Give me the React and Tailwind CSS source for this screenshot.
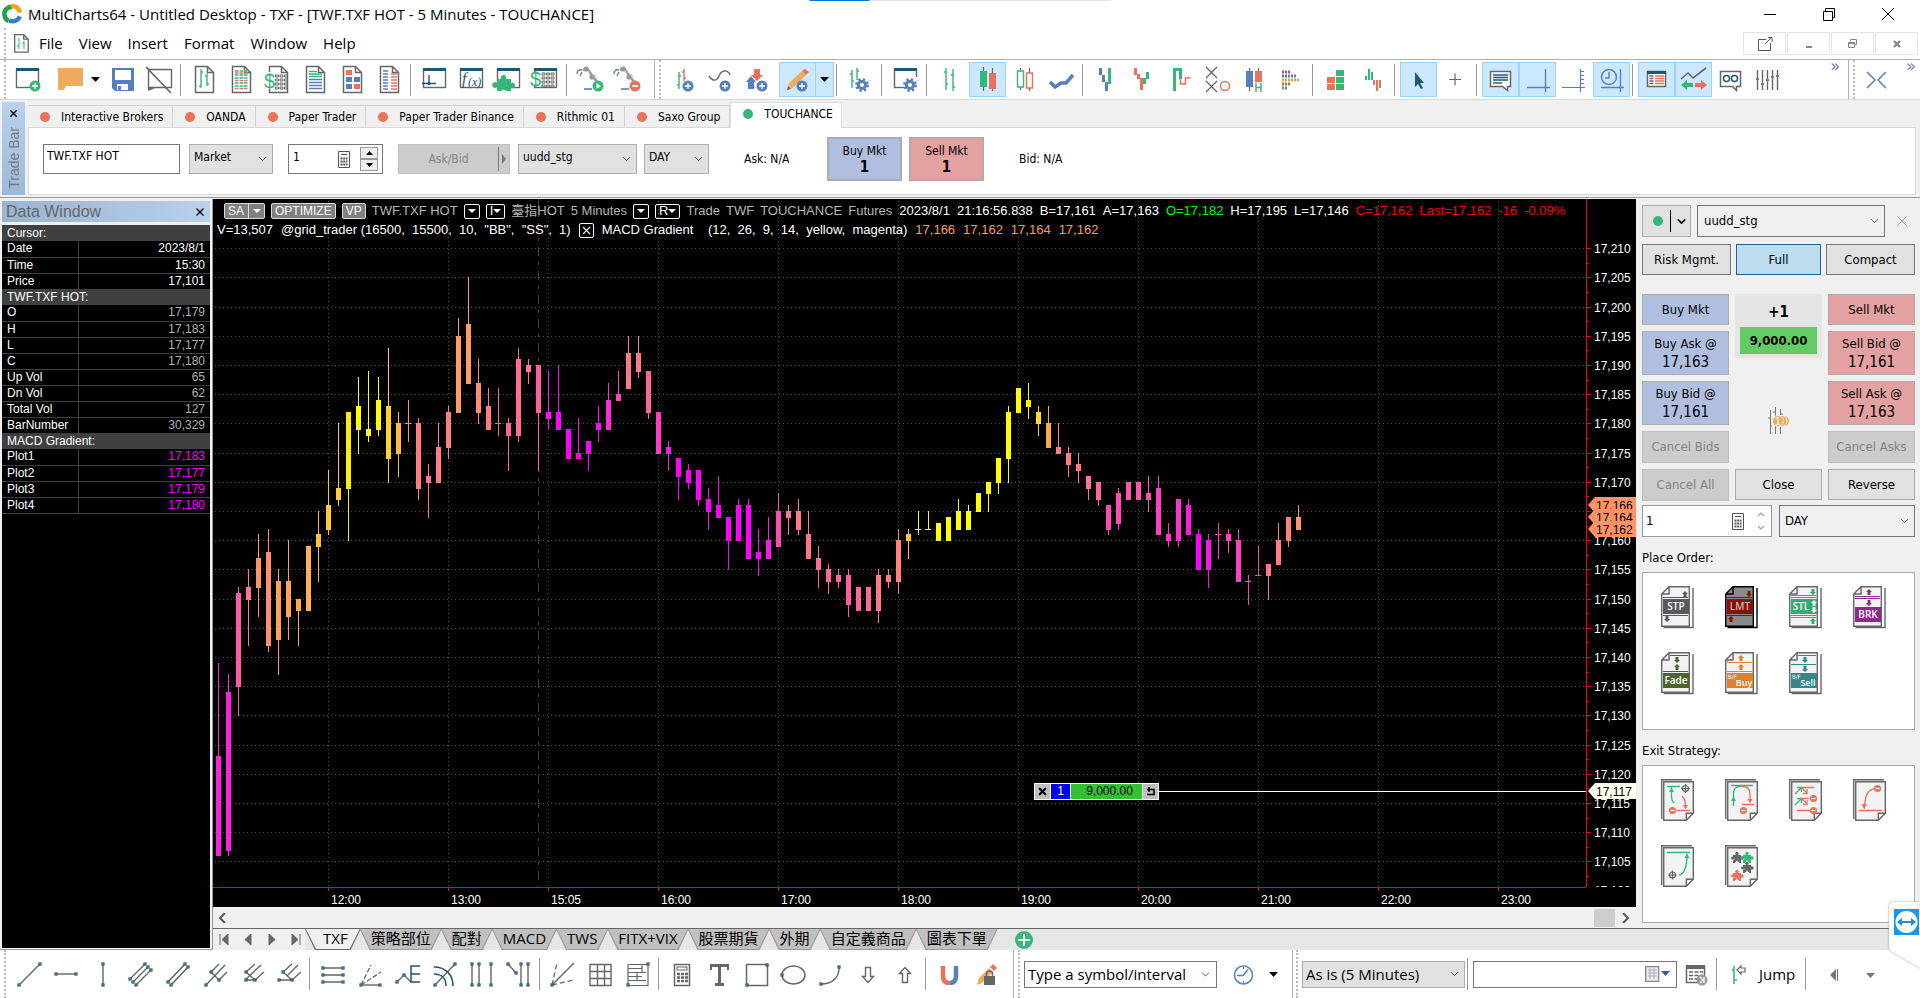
import { ChevronDown, X } from 'lucide-react';

const GRAY = '#666666';
const NAVY = '#1f5673';
const GREEN = '#35b779';
const RED = '#e8735a';
const BLUE = '#5580bd';
const SAND = '#edac60';

/* ---------- Icon building blocks ---------- */

const Doc = () => (
  <path d="M9.5 4.5h12l6 6v20h-18zM21.5 4.5v6h6" fill="#fff" stroke={GRAY} strokeWidth="1.5" />
);

const Win = () => (
  <>
    <rect x="7.5" y="7.5" width="22" height="18" fill="#fff" stroke={GRAY} strokeWidth="1.4" />
    <rect x="7" y="6" width="23" height="3" fill={NAVY} />
  </>
);

const Plus = ({ x, y, color = BLUE }) => (
  <>
    <circle cx={x} cy={y} r="5.5" fill={color} />
    <path d={`M${x - 3} ${y}h6M${x} ${y - 3}v6`} stroke="#fff" strokeWidth="1.3" />
  </>
);

const Gear = ({ x, y }) => (
  <>
    <circle cx={x} cy={y} r="5.6" fill="none" stroke={BLUE} strokeWidth="2.6" strokeDasharray="2.3 2.1" />
    <circle cx={x} cy={y} r="3.6" fill="none" stroke={BLUE} strokeWidth="3" />
  </>
);

const Lines = ({ color, x1, x2, ys, dash }) => (
  <path d={ys.map((y) => `M${x1} ${y}H${x2}`).join('')} stroke={color} strokeWidth="1.4" strokeDasharray={dash} />
);

const Keys = ({ x, y }) => (
  <path
    d={[0, 4, 8, 12].map((d) => `M${x} ${y + d}h3v2h-3zM${x + 4.5} ${y + d}h3v2h-3zM${x + 9} ${y + d}h3v2h-3z`).join('')}
    fill="none"
    stroke={GRAY}
    strokeWidth="1"
  />
);

const Robot = () => (
  <>
    <path d="M11 8l4-2 6 9 5 6" fill="none" stroke="#999" strokeWidth="2.4" />
    <path d="M15 7l3 6M22 12l3 5" fill="none" stroke="#ccc" strokeWidth="1.2" />
    <circle cx="14" cy="7" r="2.6" fill="#999" />
    <circle cx="20" cy="15" r="2.6" fill="#999" />
    <path d="M10 8c-3-1-5 1-5 4M10 10l-2 4" fill="none" stroke={BLUE} strokeWidth="1.4" />
    <path d="M12 27h8" stroke={BLUE} strokeWidth="1.6" />
  </>
);

const Dollar = ({ x, y }) => (
  <text x={x} y={y} fontSize="20" fill={GREEN} fontFamily="Liberation Sans, sans-serif">$</text>
);

const Knots = ({ points }) =>
  points.map(([x, y]) => <rect key={`${x}-${y}`} x={x - 1} y={y - 1} width="2" height="2" fill="#fff" stroke={NAVY} strokeWidth="1.2" />);

const ICONS = {
  newWindow: <><Win /><Plus x={26} y={24} color={GREEN} /></>,
  folder: <path d="M10 6h25v18H18l-2 4H10z" fill={SAND} />,
  save: (
    <>
      <path d="M8 6h22v23H11l-3-3z" fill={BLUE} />
      <path d="M11 8h16v10H11zM13 22h11v6H13z" fill="#fff" />
      <path d="M14 24h3v4h-3z" fill={BLUE} />
    </>
  ),
  noWindow: (
    <>
      <path d="M7.5 7.5h23v18h-23z" fill="none" stroke={GRAY} strokeWidth="1.4" />
      <path d="M7 25h9l-4 2-5 2z" fill={GRAY} />
      <path d="M5 5l25 26" stroke={GRAY} strokeWidth="1.8" />
    </>
  ),
  docBars: <><Doc /><path d="M15 7v19M13 24h2M15 10h2M21 11v13M19 14h2M21 22h2" stroke={GREEN} strokeWidth="1.4" /></>,
  docQuotes: (
    <>
      <Doc />
      <Lines color={GREEN} x1={12} x2={25} ys={[9, 13, 16, 21, 24]} dash="3.5 1" />
      <Lines color={RED} x1={12} x2={25} ys={[11, 18.5, 26.5]} dash="3.5 1" />
    </>
  ),
  docDollar: <><Doc /><rect x="5" y="10" width="9" height="17" fill="#fff" /><Dollar x={4} y={26} /><Keys x={15.5} y={13} /></>,
  docText: (
    <>
      <Doc />
      <Lines color={GREEN} x1={12} x2={25} ys={[12, 14.5]} />
      <Lines color={GREEN} x1={12} x2={20} ys={[9.5]} />
      <Lines color={BLUE} x1={12} x2={25} ys={[17.5, 20.5, 23.5, 26.5]} />
    </>
  ),
  docTiles: (
    <>
      <Doc />
      <path d="M12 8h6v5h-6zM20 22h6v5h-6z" fill={RED} />
      <path d="M12 15h6v5h-6zM20 15h6v5h-6zM12 22h6v5h-6z" fill={BLUE} />
    </>
  ),
  docTable: (
    <>
      <Doc />
      <Lines color={BLUE} x1={12} x2={17} ys={[9, 12, 15, 18, 21, 24, 27]} />
      <Lines color={RED} x1={20} x2={26} ys={[12, 15, 18, 21, 24, 27]} />
    </>
  ),
  winLine: <><Win /><path d="M13 13v9M6 21.5h14" stroke={NAVY} strokeWidth="1.4" /><circle cx="13" cy="21.5" r="1.5" fill={NAVY} /></>,
  winFx: (
    <>
      <Win />
      <text x="9" y="22" fontSize="16" fontStyle="italic" fill={NAVY} fontFamily="Liberation Serif, serif">f</text>
      <text x="15" y="24" fontSize="12" fontStyle="italic" fill={NAVY} fontFamily="Liberation Serif, serif">(x)</text>
    </>
  ),
  winPuzzle: <><Win /><path d="M7 17h4a2.800 2.800 0 1 1 5 0h5v4a2.800 2.800 0 1 1 0 5v3h-5a2.800 2.800 0 0 0-5 0H7v-4a2.800 2.800 0 1 1 0-4z" fill={GREEN} /></>,
  winDollar: <><Win /><rect x="4" y="10" width="9" height="14" fill="#fff" /><Dollar x={3} y={24} /><Keys x={15} y={11} /></>,
  robotPlay: <><Robot /><circle cx="26" cy="24" r="5.5" fill={GREEN} /><path d="M24.5 21l4.5 3-4.500 3z" fill="#fff" /></>,
  robotStop: <><Robot /><circle cx="26" cy="24" r="5.5" fill={RED} /><path d="M23 24h6" stroke="#fff" strokeWidth="1.6" /></>,
  barsPlus: <><path d="M11 10v17M9 23h2M11 14h2" stroke={GREEN} strokeWidth="1.4" /><path d="M16 7v12M14 10h2M16 16h2" stroke={RED} strokeWidth="1.4" /><Plus x={20} y={24} /></>,
  wavePlus: <><path d="M4 14c4 6 8 5 10 0s8-8 11-1" fill="none" stroke={GRAY} strokeWidth="1.4" /><Plus x={20} y={24} /></>,
  arrowsPlus: (
    <>
      <path d="M12 7h6v6h3l-6 6-6-6h3z" fill={RED} />
      <path d="M9 14l5 6h-2v7H6v-7H4z" fill={BLUE} />
      <Plus x={20} y={24} />
    </>
  ),
  pencilPlus: (
    <>
      <path d="M8 28l2-7L23 9l4 4-12 12z" fill={SAND} />
      <path d="M23 9l3-2 4 3-3 3z" fill={RED} />
      <path d="M8 28l1-4 3 3z" fill={GRAY} />
      <Plus x={23} y={24} />
    </>
  ),
  barsGear: <><path d="M10 8v18M8 12h2M10 19h2M15 6v12M15 9h2" stroke={GREEN} strokeWidth="1.4" /><Gear x={20} y={23} /></>,
  winGear: <><Win /><rect x="17" y="15" width="15" height="14" fill="#fff" /><Gear x={23} y={23} /></>,
  ohlc: <path d="M14 6v22M12 10h2M14 22h2M21 7v22M19 13h2M21 25h2" stroke={GREEN} strokeWidth="1.4" />,
  candles: (
    <>
      <path d="M14.5 5v24M23.5 6v23" stroke={GRAY} strokeWidth="1.2" />
      <path d="M11 9h7v16h-7z" fill={GREEN} />
      <path d="M20 11h7v16h-7z" fill={RED} />
    </>
  ),
  hollow: (
    <>
      <path d="M14.5 6v3M14.5 25v3M23.5 6v5M23.5 26v3" stroke={GRAY} strokeWidth="1.2" />
      <path d="M11.5 9h6v16h-6z" fill="none" stroke={GREEN} strokeWidth="1.4" />
      <path d="M20.5 11h6v15h-6z" fill="none" stroke={RED} strokeWidth="1.4" />
    </>
  ),
  line: <path d="M7 20l5 5 6-4 5 0 7-8" fill="none" stroke={BLUE} strokeWidth="3.5" />,
  kagi1: (
    <>
      <path d="M11 6h3v7h-3zM14 13h3v7h-3zM17 20h3v9h-3z" fill={BLUE} />
      <path d="M20 6h3v16h-3z" fill={GREEN} />
    </>
  ),
  kagi2: (
    <>
      <path d="M9 6h3v7H9zM12 12h3v5h-3zM15 16h3v12h-3z" fill={RED} />
      <path d="M18 16h3v6h-3zM21 10h3v7h-3z" fill={GREEN} />
    </>
  ),
  renko: (
    <>
      <path d="M12.5 29V7.5h6V17" fill="none" stroke={GREEN} strokeWidth="3" />
      <path d="M18.5 16v6h5v-6h5" fill="none" stroke={RED} strokeWidth="1.5" />
    </>
  ),
  pointFig: (
    <>
      <path d="M7 5l11 11M18 5L7 16M7 19l11 11M18 19L7 30" stroke={GRAY} strokeWidth="1.3" />
      <circle cx="26" cy="24" r="4.5" fill="none" stroke={RED} strokeWidth="1.4" />
    </>
  ),
  heikin: (
    <>
      <path d="M13.5 6v23M22.5 6v5" stroke={GRAY} strokeWidth="1.2" />
      <path d="M10 9h7v16h-7z" fill={BLUE} />
      <path d="M19 9h7v11h-7z" fill={RED} />
      <path d="M20 21v9M25 21v9M20 25.5h5" stroke={GREEN} strokeWidth="1.4" />
    </>
  ),
  profile: (
    <>
      <path d="M9 10h9" stroke="#a8597a" strokeWidth="3" strokeDasharray="2 1" />
      <path d="M9 14h15" stroke={BLUE} strokeWidth="3" strokeDasharray="2 1" />
      <path d="M9 18h18" stroke="#dba04f" strokeWidth="3" strokeDasharray="2 1" />
      <path d="M9 22h9" stroke="#c46648" strokeWidth="3" strokeDasharray="2 1" />
      <path d="M9 26h6" stroke="#5fa05c" strokeWidth="3" strokeDasharray="2 1" />
    </>
  ),
  blocks: (
    <>
      <path d="M18 8h8v6h-8zM18 15h8v6h-8z" fill={GREEN} />
      <path d="M9 15h8v6H9zM9 22h8v6H9z" fill={RED} />
      <path d="M18 22h8v6h-8z" fill={GREEN} />
    </>
  ),
  delta: (
    <>
      <path d="M10 14h2v4h-2zM13 7h2v11h-2zM16 10h2v8h-2z" fill={GREEN} />
      <path d="M18 18h2v5h-2zM21 18h2v11h-2zM24 18h2v8h-2z" fill={RED} />
    </>
  ),
  cursor: <path d="M15 10v15l3-3 3 5 2-1-3-5h4z" fill={NAVY} />,
  cross: <path d="M12 17.5h12M18 11.5v12" stroke={GRAY} strokeWidth="1.2" />,
  comment: (
    <>
      <path d="M8.5 9.5h20v15h-3v4l-5-4h-12z" fill="#fff" stroke={GRAY} strokeWidth="1.5" />
      <Lines color={NAVY} x1={11} x2={26} ys={[13, 15.5, 18]} />
      <Lines color={NAVY} x1={11} x2={20} ys={[21]} />
    </>
  ),
  axes: <path d="M8 25.5h23M26.5 7v23" stroke={BLUE} strokeWidth="1.4" />,
  axisTicks: <path d="M6 25.5h23M24.5 7v23M24 9.5h4M24 13.5h4M24 17.5h4M24 21.5h4" stroke={BLUE} strokeWidth="1.2" />,
  clockAxes: (
    <>
      <circle cx="16" cy="15" r="7.5" fill="none" stroke={BLUE} strokeWidth="1.5" />
      <path d="M16 10v6h-4M8 25.5h23M27.5 7v23" fill="none" stroke={BLUE} strokeWidth="1.4" />
    </>
  ),
  news: (
    <>
      <rect x="9.5" y="9.5" width="18" height="15" fill="#fff" stroke={GRAY} strokeWidth="1.5" />
      <rect x="9" y="9" width="19" height="3" fill={NAVY} />
      <Lines color={GRAY} x1={11.5} x2={15.5} ys={[14, 16.5, 19, 21.5]} />
      <Lines color={RED} x1={17} x2={26} ys={[14, 16.5, 19, 21.5]} />
    </>
  ),
  trend: (
    <>
      <path d="M6 17l7-6 5 5L31 6" fill="none" stroke={GRAY} strokeWidth="1.6" />
      <path d="M6 23l6-5v3h6v4h-6v3z" fill={GREEN} />
      <path d="M32 23l-6-5v3h-6v4h6v3z" fill={RED} />
    </>
  ),
  glasses: (
    <>
      <path d="M8.5 9.5h20v15h-4v4l-4-4h-12z" fill="#fff" stroke={GRAY} strokeWidth="1.5" />
      <circle cx="14.5" cy="16.5" r="3" fill="none" stroke={NAVY} strokeWidth="1.5" />
      <circle cx="22.5" cy="16.5" r="3" fill="none" stroke={NAVY} strokeWidth="1.5" />
    </>
  ),
  sliders: (
    <>
      <path d="M8.5 8v20M13.5 8v20M18.5 8v20M23.5 8v20M28.5 8v20" stroke={GRAY} strokeWidth="1.4" />
      <path d="M7 16h3v2H7zM12 21h3v2h-3zM17 17h3v2h-3zM22 14h3v2h-3zM27 13h3v2h-3z" fill={BLUE} />
    </>
  ),
  compress: <path d="M10 10l8 8-8 8M29 10l-8 8 8 8" fill="none" stroke={BLUE} strokeWidth="1.5" />,

  trendLine: <><path d="M8 28L29 7" stroke={GRAY} strokeWidth="1.4" /><Knots points={[[8, 28], [29, 7]]} /></>,
  hLine: <><path d="M8 17h20" stroke={GRAY} strokeWidth="1.4" /><Knots points={[[8, 17], [28, 17]]} /></>,
  vLine: <><path d="M18 7v21" stroke={GRAY} strokeWidth="1.4" /><Knots points={[[18, 7], [18, 28]]} /></>,
  channel3: (
    <>
      <path d="M8 22L23 7M11 25L26 10M14 28L29 13" stroke={GRAY} strokeWidth="1.4" />
      <Knots points={[[8, 22], [23, 7], [11, 25], [26, 10], [14, 28], [29, 13]]} />
    </>
  ),
  channel2: (
    <>
      <path d="M9 25L26 7M12 28L29 10" stroke={GRAY} strokeWidth="1.6" />
      <Knots points={[[9, 25], [26, 7], [12, 28], [29, 10]]} />
    </>
  ),
  fork1: (
    <>
      <path d="M10 28L29 8M15 15l8-8M23 23l8-8M15 15l8 8" stroke={GRAY} strokeWidth="1.4" />
      <Knots points={[[10, 28], [15, 15], [23, 23]]} />
    </>
  ),
  fork2: (
    <>
      <path d="M12 23L28 8M13 15l9-8M22 23l9-8M13 15l9 8h-9" fill="none" stroke={GRAY} strokeWidth="1.4" />
      <Knots points={[[13, 23], [13, 15], [22, 23]]} />
    </>
  ),
  fork3: (
    <>
      <path d="M17 19L28 8M13 15l9-8M22 23l9-8M13 15l9 8H9" fill="none" stroke={GRAY} strokeWidth="1.4" />
      <Knots points={[[9, 23], [13, 15], [22, 23]]} />
    </>
  ),
  retrace: (
    <>
      <path d="M8 11h20M8 18h20M8 25h20" stroke={GRAY} strokeWidth="1.4" />
      <Knots points={[[8, 11], [28, 11], [8, 18], [28, 18], [8, 25], [28, 25]]} />
    </>
  ),
  fanLines: (
    <>
      <path d="M9 28h19" stroke={GRAY} strokeWidth="1.4" />
      <path d="M9 28L29 15M9 28L19 8" stroke={GRAY} strokeWidth="1.3" strokeDasharray="5 2" />
      <Knots points={[[9, 28], [28, 28]]} />
    </>
  ),
  extension: (
    <>
      <path d="M8 25l7-7 7 7" fill="none" stroke={GRAY} strokeWidth="1.4" />
      <path d="M31 9h-9v16h9M22 17h9" fill="none" stroke={NAVY} strokeWidth="1.5" />
      <Knots points={[[8, 25], [15, 18]]} />
    </>
  ),
  arcs: (
    <>
      <path d="M9 28L29 7" stroke={GRAY} strokeWidth="1.4" />
      <path d="M8 10c12 0 19 8 19 19M8 17c8 0 12 5 12 12" fill="none" stroke={NAVY} strokeWidth="1.5" />
      <Knots points={[[9, 28], [29, 7]]} />
    </>
  ),
  timeZones: (
    <>
      <path d="M9 7v21M16 7v21M28 7v21" stroke={GRAY} strokeWidth="1.4" />
      <Knots points={[[9, 7], [9, 28], [16, 7], [16, 28], [28, 7], [28, 28]]} />
    </>
  ),
  timeExt: (
    <>
      <path d="M8 7l8 9M21 7v21M28 7v21" stroke={GRAY} strokeWidth="1.4" />
      <Knots points={[[8, 7], [16, 16], [21, 7], [21, 28], [28, 7], [28, 28]]} />
    </>
  ),
  gannFan: (
    <>
      <path d="M7 28L29 6" stroke={GRAY} strokeWidth="1.4" />
      <path d="M7 28l5-22M7 28l22-5" stroke={GRAY} strokeWidth="1.3" strokeDasharray="5 3" />
      <Knots points={[[7, 28]]} />
    </>
  ),
  gannGrid: <path d="M8 7.5h21v21h-21zM15.5 7v21M22.5 7v21M8 14.5h21M8 21.5h21" fill="none" stroke={GRAY} strokeWidth="1.4" />,
  gannBox: (
    <>
      <path d="M9 7.5h20v21h-20zM9 11.5h14M9 15.5h18M9 19.5h14M9 23.5h18M23 7v8M18 15v8" fill="none" stroke={GRAY} strokeWidth="1.2" />
      <Knots points={[[9, 28], [29, 7]]} />
    </>
  ),
  calculator: (
    <>
      <rect x="10.5" y="7.5" width="15" height="21" fill="none" stroke={GRAY} strokeWidth="1.5" />
      <rect x="13" y="10" width="10" height="3" fill="none" stroke={GRAY} />
      <path d="M13 17h11M13 20.5h11M13 24h11" stroke={GRAY} strokeWidth="2.5" strokeDasharray="3 1" />
    </>
  ),
  text: <path d="M9 7h19v6h-2v-3h-6v16h3v3h-9v-3h3V10h-6v3H9z" fill={GRAY} />,
  rect: <><rect x="8.5" y="7.5" width="21" height="21" fill="none" stroke={GRAY} strokeWidth="1.5" /><Knots points={[[9, 28], [29, 8]]} /></>,
  ellipse: <><ellipse cx="18.5" cy="18" rx="11.5" ry="9" fill="none" stroke={GRAY} strokeWidth="1.5" /><Knots points={[[7, 18]]} /></>,
  arc: <><path d="M9 27c10 0 18-5 18-16" fill="none" stroke={GRAY} strokeWidth="1.4" /><Knots points={[[9, 27], [27, 10]]} /></>,
  arrowDown: <path d="M16.5 10.5h5v9h3l-5.500 6-5.500-6h3z" fill="none" stroke={GRAY} strokeWidth="1.4" />,
  arrowUp: <path d="M16.5 25.5h5v-9h3l-5.500-6-5.500 6h3z" fill="none" stroke={GRAY} strokeWidth="1.4" />,
  magnet: (
    <>
      <path d="M12 9v10c0 5 2.500 7 6.500 7" fill="none" stroke={RED} strokeWidth="4.5" />
      <path d="M25 9v10c0 5-2.500 7-6.500 7" fill="none" stroke={BLUE} strokeWidth="4.5" />
    </>
  ),
  pencilLock: (
    <>
      <path d="M9 28l2-7L21 11l4 4-11 11z" fill={SAND} />
      <path d="M22 10l3-3 4 4-3 3z" fill={RED} />
      <rect x="16" y="19" width="11" height="9" fill={GRAY} />
      <path d="M18.5 19v-2a3 3 0 0 1 6 0v2" fill="none" stroke={GRAY} strokeWidth="1.5" />
    </>
  ),
  clock: (
    <>
      <circle cx="18.5" cy="18" r="9" fill="none" stroke={BLUE} strokeWidth="1.5" />
      <path d="M12 18.5h6l5-6M18.5 10v2M18.5 24v2" fill="none" stroke={BLUE} strokeWidth="1.4" />
    </>
  ),
  scriptRun: (
    <>
      <rect x="9.5" y="9.5" width="18" height="16" fill="#fff" stroke={GRAY} strokeWidth="1.5" />
      <rect x="9" y="8" width="19" height="4" fill={GRAY} />
      <path d="M12 15h14M12 18.5h14M12 22h8" stroke={GRAY} strokeWidth="1.5" strokeDasharray="4 1.5" />
      <circle cx="25" cy="23" r="5.5" fill="#999" />
      <path d="M23 20l3 3-3 3M27 20v6" fill="none" stroke="#fff" strokeWidth="1.3" />
    </>
  ),
  jump: (
    <>
      <path d="M12 9v18M10 13h2M12 23h3" stroke={GREEN} strokeWidth="1.5" />
      <path d="M15 13l4-4v2h4v4h-4v2z" fill="none" stroke={GRAY} strokeWidth="1.2" />
    </>
  ),
  stepBack: <path d="M15 18l6-6v12zM22 12h1v12h-1z" fill="#777" />,
  play: <path d="M14 16h9l-4.500 5z" fill="#777" />,
};

/* ---------- Toolbar parts ---------- */

function ToolButton({ name, active, wide }) {
  return (
    <button
      type="button"
      aria-label={name}
      className={`flex h-[35px] shrink-0 items-center justify-center border ${wide ? 'w-10' : 'w-[37px]'} ${
        active ? 'border-[#99d1ff] bg-[#cce8ff]' : 'border-transparent'
      }`}
    >
      <svg width="37" height="35" viewBox="0 0 37 35" className="shrink-0">{ICONS[name]}</svg>
    </button>
  );
}

const Tools = ({ names, active = [] }) => names.map((n) => <ToolButton key={n} name={n} active={active.includes(n)} />);

const Sep = () => <div className="mr-[5px] ml-0.5 h-8 w-px shrink-0 bg-[#999]" />;

const Grip = () => <div className="w-0 shrink-0 self-stretch border-l-2 border-dotted border-[#bbb]" />;

const Caret = ({ active, label }) => (
  <button
    type="button"
    aria-label={label}
    className={`flex h-[35px] w-[18px] shrink-0 items-center justify-center ${active ? 'border border-l-0 border-[#99d1ff] bg-[#cce8ff]' : ''}`}
  >
    <svg width="9" height="5" viewBox="0 0 9 5"><path d="M0 0h9L4.500 5z" /></svg>
  </button>
);

const More = () => <span className="self-start text-lg leading-3 text-[#7d7db3]">»</span>;

function Select({ label, value, className = '', selectClass = '' }) {
  return (
    <div className={`relative ${className}`}>
      <select aria-label={label} defaultValue={value} className={`h-full w-full appearance-none rounded-none border outline-none ${selectClass}`}>
        <option>{value}</option>
      </select>
      <ChevronDown size={13} strokeWidth={1.6} className="pointer-events-none absolute top-1/2 right-1 -translate-y-1/2 text-[#444]" />
    </div>
  );
}

const CalcIcon = () => (
  <svg width="12" height="17" viewBox="0 0 12 17" className="shrink-0">
    <path d="M.5.5h11v16H.5zM3 3.500h6" fill="none" stroke="#555" />
    <path d="M2.500 7.500h7M2.500 10.500h7M2.500 13.500h7" stroke="#555" strokeWidth="2" strokeDasharray="2 .7" />
  </svg>
);

/* ---------- Top area ---------- */

function TitleBar() {
  return (
    <header className="relative flex h-7 shrink-0 items-center pr-[25px] pl-0.5 font-[family-name:'Open_Sans',sans-serif]">
      <div className="absolute top-0 left-1/2 flex h-px w-[301px] -translate-x-1/2 bg-[#e5e5e5]">
        <div className="w-[60px] bg-[#0078d7]" />
      </div>
      <svg width="20" height="20" viewBox="0 0 20 20" fill="none" strokeWidth="4.5">
        <path d="M10 3C4 3 2 7 2.500 11c.3 3 2 5 4 6" stroke="#19a34a" />
        <path d="M9 2.500c4-1 8 1 9 6" stroke="#f6a21c" />
        <path d="M7 16.500c5 2 9 0 11-4" stroke="#3c7fc8" />
      </svg>
      <h1 className="ml-1.5 text-[15px]">MultiCharts64 - Untitled Desktop - TXF - [TWF.TXF HOT - 5 Minutes - TOUCHANCE]</h1>
      <div className="ml-auto flex gap-[45px]">
        <button type="button" aria-label="Minimize">
          <svg width="14" height="14"><path d="M1 7.500h12" stroke="#000" /></svg>
        </button>
        <button type="button" aria-label="Restore">
          <svg width="14" height="14"><path d="M1.500 4.500h9v9h-9zM3.500 4v-2.500h9v9H11" fill="none" stroke="#000" /></svg>
        </button>
        <button type="button" aria-label="Close">
          <svg width="14" height="14"><path d="M1 1l12 12M13 1L1 13" stroke="#000" /></svg>
        </button>
      </div>
    </header>
  );
}

function MenuBar() {
  const box = 'flex h-[23px] w-[43px] items-center justify-center border border-[#e5e5e5]';
  return (
    <nav className="flex h-8 shrink-0 items-center border-b border-[#b0b0b0] pl-1 font-[family-name:'Open_Sans',sans-serif] text-[15px]">
      <Grip />
      <svg width="15" height="19" viewBox="0 0 15 19" className="ml-2 shrink-0">
        <path d="M.7.7h9l4.500 4.500v13H.7zM9.700.7v4.500h4.500" fill="none" stroke={GRAY} strokeWidth="1.3" />
        <path d="M5 4v11M3 12h2M10 7v8M8 9h2" stroke={GREEN} />
      </svg>
      <div className="flex gap-4 pl-2.5">
        {['File', 'View', 'Insert', 'Format', 'Window', 'Help'].map((m) => (
          <button key={m} type="button">{m}</button>
        ))}
      </div>
      <div className="ml-auto flex gap-px pr-0.5">
        <button type="button" aria-label="Detach" className={box}>
          <svg width="16" height="14" fill="none" stroke="#555"><path d="M9 2.500H1.500v11h12V6M8 7l6-6M11 .500h4v4" /></svg>
        </button>
        <button type="button" aria-label="Minimize chart" className={box}>
          <svg width="8" height="9"><path d="M1 7h6v2H1z" fill="#7d8793" /></svg>
        </button>
        <button type="button" aria-label="Restore chart" className={box}>
          <svg width="9" height="9" fill="none" stroke="#7d8793"><path d="M2.500 2.500v-2h6v5h-2M.500 3.500h6v5h-6zM.500 4.500h6" /></svg>
        </button>
        <button type="button" aria-label="Close chart" className={box}>
          <X size={10} strokeWidth={5} className="text-[#7d8793]" />
        </button>
      </div>
    </nav>
  );
}

function MainToolbar() {
  return (
    <div className="flex h-10 shrink-0 items-center border-b border-[#d8d8d8] pl-1">
      <Grip />
      <div className="ml-[3px] flex items-center">
        <Tools names={['newWindow']} />
        <ToolButton name="folder" wide />
        <Caret label="Open recent" />
        <Tools names={['save', 'noWindow']} />
        <Sep />
        <Tools names={['docBars', 'docQuotes', 'docDollar', 'docText', 'docTiles', 'docTable']} />
        <Sep />
        <Tools names={['winLine', 'winFx', 'winPuzzle', 'winDollar']} />
        <Sep />
        <Tools names={['robotPlay', 'robotStop']} />
      </div>
      <div className="ml-2 w-px self-stretch bg-[#b0b0b0]" />
      <div className="ml-1 flex self-stretch"><Grip /></div>
      <div className="ml-[7px] flex items-center">
        <Tools names={['barsPlus', 'wavePlus', 'arrowsPlus', 'pencilPlus']} active={['pencilPlus']} />
        <Caret label="Drawing tools" active />
        <Sep />
        <Tools names={['barsGear']} />
        <Sep />
        <Tools names={['winGear']} />
        <Sep />
        <Tools names={['ohlc', 'candles', 'hollow', 'line']} active={['candles']} />
        <Sep />
        <Tools names={['kagi1', 'kagi2', 'renko', 'pointFig', 'heikin', 'profile']} />
        <Sep />
        <Tools names={['blocks', 'delta']} />
        <Sep />
        <Tools names={['cursor', 'cross']} active={['cursor']} />
        <Sep />
        <Tools names={['comment', 'axes', 'axisTicks', 'clockAxes']} active={['comment', 'axes', 'clockAxes']} />
        <Sep />
        <Tools names={['news', 'trend', 'glasses', 'sliders']} active={['news', 'trend']} />
      </div>
      <div className="ml-auto flex items-center self-stretch pr-1">
        <More />
        <div className="ml-2 w-px self-stretch bg-[#b0b0b0]" />
        <div className="ml-1 flex self-stretch"><Grip /></div>
        <div className="ml-0.5 flex"><ToolButton name="compress" /></div>
        <div className="ml-3 flex self-stretch"><More /></div>
      </div>
    </div>
  );
}

const BROKERS = ['Interactive Brokers', 'OANDA', 'Paper Trader', 'Paper Trader Binance', 'Rithmic 01', 'Saxo Group'];

function TradeBar() {
  return (
    <section className="flex h-[98px] shrink-0 border-b border-[#999] bg-[#f0f0f0] pt-0.5 pr-1 pb-0.5 pl-0.5 text-xs">
      <div className="flex w-[23px] flex-col items-center bg-linear-to-b from-[#b8d1ec] to-[#9db8d8]">
        <button type="button" aria-label="Close trade bar" className="mt-1.5"><X size={11} strokeWidth={3} /></button>
        <span className="mt-2 rotate-180 font-[family-name:'Liberation_Sans',sans-serif] text-sm text-[#777] [writing-mode:vertical-rl]">Trade Bar</span>
      </div>
      <div className="ml-[3px] flex flex-1 flex-col">
        <div className="flex h-[25px] items-end">
          {BROKERS.map((b) => (
            <button key={b} type="button" className="flex h-[22px] items-center gap-[11px] border-t border-r border-[#d4d4d4] pr-[9px] pl-3 text-xs">
              <span className="size-2.5 rounded-full bg-[#e8735a]" />
              {b}
            </button>
          ))}
          <button type="button" className="relative z-10 -mb-px flex h-[26px] items-center gap-[11px] border-x border-t border-[#ddd] bg-white pr-2 pb-1 pl-3 text-xs">
            <span className="size-2.5 rounded-full bg-[#35b779]" />
            TOUCHANCE
          </button>
        </div>
        <div className="flex flex-1 items-center border border-[#d9d9d9] bg-white pb-1 pl-3.5">
          <input aria-label="Symbol" defaultValue="TWF.TXF HOT" className="h-[30px] w-[137px] border border-[#777] pb-1.5 pl-[3px] outline-none" />
          <Select label="Order type" value="Market" className="ml-[9px] h-[30px] w-[84px]" selectClass="border-[#adadad] bg-[#e1e1e1] pl-1 pb-1" />
          <div className="ml-[15px] flex h-[30px] w-[95px] items-center border border-[#777] pr-1">
            <input aria-label="Quantity" defaultValue="1" className="w-full min-w-0 pb-1 pl-1 outline-none" />
            <CalcIcon />
            <div className="ml-2.5 flex flex-col">
              <button type="button" aria-label="Increase" className="flex h-3 w-[18px] items-center justify-center border border-[#999] bg-[#eee]">
                <svg width="7" height="4"><path d="M0 4h7L3.500 0z" /></svg>
              </button>
              <button type="button" aria-label="Decrease" className="flex h-3 w-[18px] items-center justify-center border border-[#999] bg-[#eee]">
                <svg width="7" height="4"><path d="M0 0h7L3.500 4z" /></svg>
              </button>
            </div>
          </div>
          <button type="button" disabled className="ml-[15px] flex h-[30px] w-28 items-center border border-[#bfbfbf] bg-[#ccc] text-[#838383]">
            <span className="flex-1">Ask/Bid</span>
            <span className="h-6 w-px bg-[#777]" />
            <svg width="10" height="10"><path d="M3 0v10l4-5z" fill="#777" /></svg>
          </button>
          <Select label="Account" value="uudd_stg" className="ml-2 h-[30px] w-[119px]" selectClass="border-[#adadad] bg-[#e1e1e1] pl-1 pb-1" />
          <Select label="Time in force" value="DAY" className="ml-[7px] h-[30px] w-[65px]" selectClass="border-[#adadad] bg-[#e1e1e1] pl-1 pb-1" />
          <span className="ml-[35px] w-[83px]">Ask: N/A</span>
          <button type="button" className="flex h-11 w-[75px] flex-col items-center justify-center border-2 border-[#a9acb5] bg-[#b0bfe0] leading-4">
            Buy Mkt<b className="text-[15px]">1</b>
          </button>
          <button type="button" className="ml-[7px] flex h-11 w-[75px] flex-col items-center justify-center border-2 border-[#b5a9a9] bg-[#e3a1a1] leading-4">
            Sell Mkt<b className="text-[15px]">1</b>
          </button>
          <span className="ml-[35px]">Bid: N/A</span>
        </div>
      </div>
    </section>
  );
}

/* ---------- Data window ---------- */

const DATA = [
  { title: 'Cursor:', tone: 'text-white', rows: [['Date', '2023/8/1'], ['Time', '15:30'], ['Price', '17,101']] },
  {
    title: 'TWF.TXF HOT:',
    tone: 'text-[#b0b0b0]',
    rows: [
      ['O', '17,179'], ['H', '17,183'], ['L', '17,177'], ['C', '17,180'],
      ['Up Vol', '65'], ['Dn Vol', '62'], ['Total Vol', '127'], ['BarNumber', '30,329'],
    ],
  },
  { title: 'MACD Gradient:', tone: 'text-[#ff00ff]', rows: [['Plot1', '17,183'], ['Plot2', '17,177'], ['Plot3', '17,179'], ['Plot4', '17,180']] },
];

function DataWindow() {
  return (
    <aside className="flex w-[213px] shrink-0 flex-col border-r border-b border-[#999] bg-[#f0f0f0] px-0.5 pt-0.5 pb-px font-[family-name:'Liberation_Sans',sans-serif]">
      <div className="flex h-[21px] items-center justify-between bg-linear-to-r from-[#99b4d1] to-[#b9d1ea] pr-1 pl-1 text-base text-[#666]">
        Data Window
        <button type="button" aria-label="Close data window" className="text-black"><X size={12} strokeWidth={3} /></button>
      </div>
      <div className="mt-[3px] flex-1 bg-black text-white">
        <table className="w-full border-collapse text-xs leading-[15px]">
          {DATA.map((g) => (
            <tbody key={g.title}>
              <tr className="h-4 bg-[#404040]"><th colSpan={2} className="p-0 pl-[5px] text-left font-normal">{g.title}</th></tr>
              {g.rows.map(([k, v]) => (
                <tr key={k} className="h-4 border-b border-[#404040]">
                  <td className="w-[76px] border-r border-[#404040] p-0 pl-[5px]">{k}</td>
                  <td className={`p-0 pr-[5px] text-right ${g.tone}`}>{v}</td>
                </tr>
              ))}
            </tbody>
          ))}
        </table>
      </div>
    </aside>
  );
}

/* ---------- Chart ---------- */

// [high, body top, body bottom, low, green channel]; prices are offsets from 17,000
const CANDLES = [
  [139, 123, 106, 106, 32], [137, 134, 107, 106, 32], [152, 151, 135, 130, 90], [155, 152, 150, 142, 118],
  [161, 157, 152, 147, 150], [162, 158, 142, 141, 144], [155, 153, 143, 137, 160], [160, 153, 147, 143, 162],
  [150, 150, 148, 142, 166], [159, 159, 148, 148, 178], [165, 161, 159, 153, 190], [172, 166, 162, 161, 200],
  [180, 169, 167, 166, 208], [182, 182, 169, 160, 235], [188, 183, 179, 175, 255], [189, 179, 178, 177, 255],
  [188, 184, 179, 178, 255], [193, 183, 174, 170, 210], [182, 180, 175, 171, 185], [184, 180, 180, 177, 150],
  [181, 180, 169, 167, 125], [173, 171, 170, 164, 120], [180, 176, 170, 170, 125], [183, 182, 176, 174, 130],
  [198, 195, 182, 182, 155], [205, 197, 187, 187, 155], [191, 187, 182, 180, 140], [186, 183, 179, 179, 125],
  [186, 180, 180, 178, 110], [181, 180, 178, 172, 100], [193, 191, 178, 177, 110], [191, 190, 189, 187, 120],
  [190, 190, 182, 172, 95], [189, 182, 181, 179, 20], [190, 182, 179, 179, 5], [179, 179, 174, 174, 0],
  [181, 175, 174, 174, 0], [177, 177, 175, 172, 0], [183, 180, 179, 177, 15], [187, 184, 179, 179, 45],
  [189, 185, 184, 184, 70], [195, 192, 186, 186, 120], [195, 192, 189, 188, 122], [189, 189, 182, 181, 100],
  [182, 182, 175, 175, 60], [177, 176, 175, 172, 25], [174, 174, 171, 167, 0], [173, 172, 170, 169, 0],
  [172, 172, 167, 166, 0], [169, 167, 165, 162, 0], [171, 166, 164, 164, 0], [164, 164, 160, 155, 0],
  [167, 166, 160, 160, 0], [167, 166, 157, 157, 0], [162, 158, 157, 154, 5], [164, 160, 157, 157, 25],
  [168, 165, 159, 159, 75], [166, 165, 164, 161, 120], [167, 165, 162, 161, 122], [165, 161, 157, 157, 118],
  [159, 157, 155, 152, 110], [156, 155, 153, 151, 105], [155, 154, 153, 152, 100], [155, 154, 149, 147, 95],
  [152, 152, 148, 148, 100], [152, 152, 148, 148, 105], [155, 154, 148, 146, 120], [155, 154, 153, 152, 122],
  [162, 160, 153, 151, 130], [162, 161, 160, 157, 200], [165, 162, 162, 161, 255], [165, 162, 162, 162, 255],
  [163, 163, 160, 160, 255], [164, 164, 160, 160, 255], [167, 165, 162, 162, 255], [166, 165, 162, 162, 255],
  [168, 168, 165, 165, 255], [170, 170, 168, 165, 255], [174, 174, 170, 168, 255], [183, 182, 174, 170, 255],
  [186, 186, 182, 182, 255], [187, 184, 183, 181, 250], [183, 182, 180, 178, 220], [183, 180, 176, 176, 165],
  [180, 176, 175, 175, 125], [176, 175, 173, 171, 122], [175, 173, 172, 170, 122], [171, 171, 169, 167, 120],
  [170, 170, 167, 166, 105], [166, 166, 162, 161, 75], [169, 168, 163, 162, 75], [170, 170, 167, 167, 85],
  [170, 170, 167, 167, 85], [171, 168, 167, 165, 80], [171, 169, 161, 161, 65], [163, 161, 160, 159, 50],
  [167, 167, 160, 159, 50], [167, 166, 161, 161, 25], [162, 161, 155, 155, 0], [161, 160, 155, 152, 20],
  [163, 161, 161, 157, 50], [162, 161, 160, 158, 70], [162, 160, 153, 153, 65], [154, 153, 153, 149, 60],
  [159, 154, 154, 154, 65], [156, 156, 154, 150, 122], [163, 160, 156, 156, 125], [164, 164, 160, 159, 128],
  [166, 164, 162, 162, 150],
];

const priceY = (p) => Math.round(49.3 + (210 - p) * 5.838);
const barX = (i) => 5 + i * 10;

const TIMES = [
  [115, '12:00'], [235, '13:00'], [335, '15:05'], [445, '16:00'], [565, '17:00'], [685, '18:00'],
  [805, '19:00'], [925, '20:00'], [1045, '21:00'], [1165, '22:00'], [1285, '23:00'],
];

const PRICES = Array.from({ length: 23 }, (_, i) => 210 - i * 5);

function ChartHeader() {
  const tag = 'border border-[#ddd] bg-[#808080] px-[3px] text-xs text-white rounded-xs leading-[14px]';
  const drop = 'flex h-[15px] items-center border border-white px-[3px] text-white rounded-xs leading-3';
  const tri = <svg width="8" height="4"><path d="M0 0h8L4 4z" fill="#fff" /></svg>;
  return (
    <div className="absolute inset-x-0 top-1 font-[family-name:'Liberation_Sans','Noto_Sans_CJK_TC',sans-serif] text-[13px] whitespace-pre text-white">
      <div className="flex h-4 items-center gap-[7px] pl-[11px]">
        <div className="flex items-center gap-1.5 text-[#b5b5b5]">
          <button type="button" className={`${tag} flex items-center gap-1`}>SA<span className="h-3.5 w-px bg-[#ddd]" />{tri}</button>
          <button type="button" className={tag}>OPTIMIZE</button>
          <button type="button" className={tag}>VP</button>
          <span>TWF.TXF HOT</span>
          <button type="button" aria-label="Symbol menu" className={drop}>{tri}</button>
          <button type="button" className={drop}>I{tri}</button>
          <span>臺指HOT</span>
          <span>5 Minutes</span>
          <button type="button" aria-label="Interval menu" className={drop}>{tri}</button>
          <button type="button" className={drop}>R{tri}</button>
          <span>Trade</span>
          <span>TWF</span>
          <span>TOUCHANCE</span>
          <span>Futures</span>
        </div>
        <span>2023/8/1</span>
        <span>21:16:56.838</span>
        <span>B=17,161</span>
        <span>A=17,163</span>
        <span className="text-[#00ff00]">O=17,182</span>
        <span>H=17,195</span>
        <span>L=17,146</span>
        <span className="text-[#ff0000]">C=17,162</span>
        <span className="text-[#ff0000]">Last=17,162</span>
        <span className="text-[#ff0000]">-16</span>
        <span className="text-[#ff0000]">-0.09%</span>
      </div>
      <div className="mt-[3px] flex h-4 items-center gap-2 pl-1">
        <span>V=13,507</span>
        <span>{'@grid_trader (16500,  15500,  10,  "BB",  "SS",  1)'}</span>
        <button type="button" aria-label="Remove signal" className="flex size-[15px] items-center justify-center rounded-xs border border-white"><X size={13} strokeWidth={2} /></button>
        <span>{'MACD Gradient    (12,  26,  9,  14,  yellow,  magenta)'}</span>
        {['17,166', '17,162', '17,164', '17,162'].map((v, i) => <span key={i} className="text-[#ff9966]">{v}</span>)}
      </div>
    </div>
  );
}

function Flag({ price, fill }) {
  const y = priceY(price);
  return (
    <>
      <path d={`M1 ${y}l7-8h42v16H8z`} fill={fill} />
      <text x="9" y={y + 5} fill="#000">{`17,${price}`}</text>
    </>
  );
}

function Chart() {
  return (
    <div className="relative flex min-w-0 flex-1 flex-col bg-black">
      <div className="flex min-h-0 flex-1">
        <svg className="h-full min-w-0 flex-1" shapeRendering="crispEdges">
          {PRICES.map((p) => (
            <line key={p} x1="2" x2="100%" y1={priceY(p) + 0.5} y2={priceY(p) + 0.5} stroke="#4c4c4c" strokeDasharray="1 3" />
          ))}
          {TIMES.map(([x]) => (
            <line key={x} x1={x + 0.5} x2={x + 0.5} y1="2" y2="100%" stroke="#4c4c4c" strokeDasharray="1 3" />
          ))}
          <line x1="325.5" x2="325.5" y1="0" y2="100%" stroke="#444" strokeDasharray="9 6 3 6" />
          {CANDLES.map(([high, top, bottom, low, g], i) => {
            const color = `rgb(255,${g},${255 - g})`;
            return (
              <g key={i} fill={color}>
                <rect x={barX(i)} y={priceY(high)} width="1" height={priceY(low) - priceY(high) + 1} />
                <rect x={barX(i) - (top === bottom ? 3 : 2)} y={priceY(top)} width={top === bottom ? 6 : 5} height={priceY(bottom) - priceY(top) + 1} />
              </g>
            );
          })}
          <line x1="946" x2="100%" y1={priceY(117) + 0.5} y2={priceY(117) + 0.5} stroke="#fff" />
        </svg>
        <svg className="h-full w-[50px] shrink-0 border-l border-[#f00] font-[family-name:'Liberation_Sans',sans-serif] text-xs">
          {PRICES.map((p) => (
            <g key={p}>
              <path d={`M0 ${priceY(p) + 0.5}h4M0 ${priceY(p - 2.5) + 0.5}h2`} stroke="#f00" />
              <text x="7" y={priceY(p) + 5} fill="#fff">{`17,${p}`}</text>
            </g>
          ))}
          <Flag price={166} fill="#ff9366" />
          <Flag price={164} fill="#ff9366" />
          <Flag price={162} fill="#ff9366" />
          <Flag price={117} fill="#fffff0" />
        </svg>
      </div>
      <div className="mr-[50px] h-px bg-[#f00]" />
      <svg className="h-[19px] w-full shrink-0 font-[family-name:'Liberation_Sans',sans-serif] text-xs">
        {TIMES.map(([x, t]) => (
          <g key={t}>
            <path d={`M${x + 0.5} 0v3`} stroke="#f00" />
            <text x={x + 3} y="16" fill="#fff">{t}</text>
          </g>
        ))}
      </svg>
      <ChartHeader />
      {/* open position marker, sits on its price level */}
      <div className="absolute top-[584px] left-[821px] flex h-[17px] border border-white bg-white font-[family-name:'Liberation_Sans',sans-serif] text-xs leading-[15px]">
        <button type="button" aria-label="Close position" className="flex w-[15px] items-center justify-center bg-[#c0c0c0]"><X size={11} strokeWidth={5} /></button>
        <span className="ml-px w-[19px] bg-[#0000ff] text-center text-white">1</span>
        <span className="ml-px w-[71px] bg-[#32c132] pl-1.5 text-center">9,000.00</span>
        <button type="button" aria-label="Reverse position" className="ml-px flex w-[15px] items-center justify-center bg-[#c0c0c0]">
          <svg width="9" height="9" fill="none" stroke="#000" strokeWidth="1.6"><path d="M1 2.500h7v5H1M3 0v5" /></svg>
        </button>
      </div>
    </div>
  );
}

function ScrollBar() {
  return (
    <div className="flex h-[21px] shrink-0 items-center bg-[#f0f0f0] pr-1.5 pl-[5px]">
      <button type="button" aria-label="Scroll left"><svg width="9" height="10"><path d="M7 0L2 5l5 5" fill="none" stroke="#555" strokeWidth="2" /></svg></button>
      <div className="ml-auto h-[18px] w-[21px] bg-[#cdcdcd]" />
      <button type="button" aria-label="Scroll right" className="ml-1.5"><svg width="9" height="10"><path d="M2 0l5 5-5 5" fill="none" stroke="#555" strokeWidth="2" /></svg></button>
    </div>
  );
}

/* ---------- Order panel ---------- */

const up = (x, y) => `M${x} ${y}l3 3h-1.500v3h-3v-3h-1.500z`;
const down = (x, y) => `M${x} ${y + 6}l3-3h-1.500v-3h-3v3h-1.500z`;

const ORDERS = [
  { name: 'STP', color: '#58595b', y: 13, lines: [11, 29], arrows: up(24, 5) + down(6, 30) },
  { name: 'LMT', color: '#8a0f05', y: 13, dark: true, lines: [11, 29], arrows: down(24, 5) + up(6, 30) },
  { name: 'STL', color: '#2fae74', y: 13, lines: [9, 11, 29, 31], arrows: down(24, 3) + up(24, 32) },
  { name: 'BRK', color: '#8d2a8b', y: 21, lines: [10, 12], arrows: up(16, 3) + down(16, 14) },
  { name: 'Fade', color: '#4c6528', y: 21, lines: [3, 19], arrows: down(16, 5) + up(16, 12) },
  { name: 'Buy', prefix: 'B/F', color: '#df822d', y: 21, lines: [10, 19], arrows: up(16, 3) + up(16, 12) },
  { name: 'Sell', prefix: 'B/F', color: '#35868c', y: 21, lines: [3, 12], arrows: down(16, 5) + down(16, 14) },
];

function OrderIcon({ name, prefix, color, y, dark, lines, arrows }) {
  const edge = dark ? '#000' : '#666';
  return (
    <svg width="33" height="43" viewBox="0 0 33 43">
      <path d="M8 .7h20.300v39.600H.7V8zM8 .7V8H.7" fill={dark ? '#8a8a8a' : '#f3f3f6'} stroke={edge} strokeWidth="1.4" />
      <path d="M32 2v39.500H2.500" fill="none" stroke={edge} strokeWidth="1.4" />
      <path d={lines.map((l) => `M${l < 8 ? 9 : 2} ${l}.5h${l < 8 ? 18 : 25}`).join('')} stroke={color} strokeWidth="1" />
      <rect x="2" y={y} width="26" height="15" fill={color} />
      <path d={arrows} fill={color} />
      {prefix && <text x="3" y={y + 6} fontSize="6" fill="#fff">{prefix}</text>}
      <text
        x={prefix ? 19 : name === 'STL' ? 12 : 15}
        y={y + (prefix ? 13 : 11)}
        fontSize={prefix ? 9 : 10}
        fontWeight="600"
        textAnchor="middle"
        fill={dark ? '#bbb' : '#fff'}
        fontFamily="Open Sans, sans-serif"
      >
        {name}
      </text>
      {name === 'STL' && <path d={up(25, 14) + down(25, 21)} fill="#fff" />}
    </svg>
  );
}

const Target = ({ x, y }) => (
  <path d={`M${x - 4.5} ${y}h9M${x} ${y - 4.5}v9M${x - 3} ${y}a3 3 0 1 0 6 0a3 3 0 1 0-6 0`} fill="none" stroke="#666" strokeWidth="1.2" />
);

const Stop = ({ x, y }) => (
  <>
    <circle cx={x} cy={y} r="3.6" fill={RED} />
    <path d={`M${x - 2} ${y}h4`} stroke="#fff" strokeWidth="1.3" />
  </>
);

const Piece = ({ x, y, color }) => (
  <g fill={color}>
    <path d={`M${x + 1} ${y + 3}h8v7h-3l-1-2-1 2h-3v-2l2-1-2-1z`} />
    <circle cx={x + 5} cy={y + 1.5} r="1.7" />
    <circle cx={x + 10} cy={y + 6} r="1.7" />
    <circle cx={x + 0.5} cy={y + 6} r="1.5" />
    <path d={`M${x + 1} ${y + 9}h2v2h-2zM${x + 7} ${y + 9}h2v2h-2z`} />
  </g>
);

const EXITS = {
  'Bracket exit': (
    <>
      <path d="M6 7.500h13M10.500 8v9c0 4 1 6 3 7" fill="none" stroke={GREEN} strokeWidth="1.3" />
      <path d="M8 13l2.500-4.500L13 13z" fill={GREEN} />
      <path d="M21 17c3 2 3.500 5 3.500 12M16 31.500h13" fill="none" stroke={RED} strokeWidth="1.3" />
      <path d="M22 26l2.500 4.500L27 26z" fill={RED} />
      <Target x={24.5} y={9.5} /><Stop x={11.5} y={31.5} />
    </>
  ),
  'Trailing stop': (
    <>
      <path d="M6 6.500h22M8.500 27V14c0-4 3-7 8-7" fill="none" stroke={GREEN} strokeWidth="1.4" />
      <path d="M6 22l2.500-4.500L11 22z" fill={GREEN} />
      <path d="M16 7c6 0 9 3 9 8v8M17 25.500h12" fill="none" stroke={RED} strokeWidth="1.4" />
      <path d="M22.500 20l2.500 4.500 2.500-4.500z" fill={RED} />
      <Stop x={18.5} y={31.5} />
    </>
  ),
  'Multi-level stop': (
    <>
      <path d="M6 15l6-6M8 8.500h4.500V13M6 26l6-6M8 19.500h4.500V24" fill="none" stroke={GREEN} strokeWidth="1.3" />
      <path d="M12 8.500h13M13 9l5 5M18 10v4.500h-4M12 19.500h8M13 20l5 5M18 21v4.500h-4M8 31.500h13" fill="none" stroke={RED} strokeWidth="1.3" />
      <Stop x={24.5} y={19.5} /><Stop x={24.5} y={31.5} />
    </>
  ),
  'Stop loss': (
    <>
      <path d="M22 9.500c-7 1-10 6-10.500 20M6 31.500h23" fill="none" stroke={RED} strokeWidth="1.4" />
      <path d="M8.500 25l2.500 5 3-5z" fill={RED} />
      <Stop x={24.5} y={9.5} />
    </>
  ),
  'Profit target': (
    <>
      <path d="M6 7.500h23M18 30c5-1 8-7 8-21" fill="none" stroke={GREEN} strokeWidth="1.4" />
      <path d="M23.500 13L26 8.500l2.500 4.500z" fill={GREEN} />
      <Target x={11.5} y={30} />
    </>
  ),
  'Custom strategy': (
    <>
      <Piece x={7} y={7} color="#666" /><Piece x={17} y={7} color={GREEN} />
      <Piece x={17} y={17} color="#666" /><Piece x={7} y={25} color={RED} />
    </>
  ),
};

const ExitIcon = ({ children }) => (
  <svg width="33" height="43" viewBox="0 0 33 43">
    <path d="M.7 40V.7H31" fill="none" stroke="#666" strokeWidth="1.4" />
    <path d="M2.700 2.700h29.600v31.600l-7 7H2.700zM25.300 41.300v-7h7" fill="#f3f3f6" stroke="#666" strokeWidth="1.4" />
    {children}
  </svg>
);

function OrderPanel() {
  const buy = 'border border-[#adadad] bg-[#b0bfe0]';
  const sell = 'border border-[#adadad] bg-[#e3a1a1]';
  const off = 'h-8 border border-[#bfbfbf] bg-[#ccc] text-[#838383]';
  const plain = 'h-[31px] border border-[#adadad] bg-[#e1e1e1]';
  const price = 'block text-[15px]';
  const iconBox = 'grid h-[158px] grid-cols-[repeat(4,64px)] content-start justify-items-start gap-y-[23px] border border-[#aaa] bg-white pt-[13px] pl-[18px]';
  return (
    <aside className="flex w-[284px] shrink-0 flex-col bg-[#f0f0f0] pt-1.5 pr-[5px] pb-[5px] pl-1.5 text-[13px] leading-[18px]">
      <div className="flex h-8 items-center">
        <button type="button" aria-label="Connection" className="flex h-8 w-[49px] items-center justify-between border border-[#adadad] bg-[#e1e1e1] pr-0.5 pl-2.5">
          <span className="size-2.5 rounded-full bg-[#35b779]" />
          <span className="flex items-center gap-1"><span className="h-[22px] w-px bg-black" /><ChevronDown size={13} strokeWidth={3} /></span>
        </button>
        <Select label="Trading account" value="uudd_stg" className="ml-1.5 h-8 flex-1" selectClass="border-[#777] bg-[#f0f0f0] pl-1.5" />
        <button type="button" aria-label="Close panel" className="mr-1 ml-2 text-[#999]"><X size={18} strokeWidth={1.3} /></button>
      </div>
      <div className="mt-[7px] flex h-[31px] gap-[5px]">
        <button type="button" className="flex-1 border border-[#777] bg-[#e1e1e1]">Risk Mgmt.</button>
        <button type="button" className="w-[85px] border border-[#26608f] bg-[#bcdcef]">Full</button>
        <button type="button" className="flex-1 border border-[#777] bg-[#e1e1e1]">Compact</button>
      </div>
      <div className="mt-[19px] grid grid-cols-3 gap-x-1.5 gap-y-1.5">
        <div className="flex flex-col gap-1.5">
          <button type="button" className={`h-[31px] ${buy}`}>Buy Mkt</button>
          <button type="button" className={`h-11 ${buy}`}>Buy Ask @<span className={price}>17,163</span></button>
          <button type="button" className={`h-11 ${buy}`}>Buy Bid @<span className={price}>17,161</span></button>
          <button type="button" disabled className={off}>Cancel Bids</button>
        </div>
        <div className="flex flex-col items-center">
          <div className="flex h-16 w-full flex-col items-center bg-[#e5e5e5] px-[5px] pt-2.5">
            <b className="text-[15px] leading-4">+1</b>
            <span className="mt-[7px] flex h-[27px] w-full items-center justify-center bg-[#63cb63] text-[13px] font-bold">9,000.00</span>
          </div>
          <svg width="22" height="30" viewBox="0 0 22 30" className="mt-12">
            <path d="M2.500 4v24M0 12h2M2 20h2M7.500 1v27M5 6h2M12.500 3v25M12 8h3" stroke="#777" fill="none" />
            <g fill={SAND} stroke="#f0f0f0">
              <circle cx="16" cy="15" r="5.5" />
              <circle cx="13.5" cy="15" r="5.5" />
              <circle cx="10" cy="15" r="5.5" />
            </g>
            <text x="7" y="19" fontSize="10" fill="#fff">1</text>
          </svg>
        </div>
        <div className="flex flex-col gap-1.5">
          <button type="button" className={`h-[31px] ${sell}`}>Sell Mkt</button>
          <button type="button" className={`h-11 ${sell}`}>Sell Bid @<span className={price}>17,161</span></button>
          <button type="button" className={`h-11 ${sell}`}>Sell Ask @<span className={price}>17,163</span></button>
          <button type="button" disabled className={off}>Cancel Asks</button>
        </div>
        <button type="button" disabled className={off}>Cancel All</button>
        <button type="button" className={plain}>Close</button>
        <button type="button" className={plain}>Reverse</button>
      </div>
      <div className="mt-1 flex h-8 gap-[7px]">
        <div className="flex w-[130px] items-center border border-[#999] bg-white pr-1">
          <input aria-label="Order quantity" defaultValue="1" className="w-full min-w-0 pl-[3px] outline-none" />
          <CalcIcon />
          <svg width="10" height="20" fill="none" stroke="#aaa" strokeWidth="1.5" className="mr-px ml-3 shrink-0"><path d="M2 5l3-3 3 3M2 15l3 3 3-3" /></svg>
        </div>
        <Select label="Order duration" value="DAY" className="flex-1" selectClass="border-[#777] bg-[#f0f0f0] pl-[5px]" />
      </div>
      <h2 className="mt-3 mb-[5px]">Place Order:</h2>
      <div className={iconBox}>
        {ORDERS.map((o) => (
          <button key={o.name} type="button" aria-label={`${o.name} order`}><OrderIcon {...o} /></button>
        ))}
      </div>
      <h2 className="mt-3 mb-[5px]">Exit Strategy:</h2>
      <div className={iconBox}>
        {Object.entries(EXITS).map(([name, art]) => (
          <button key={name} type="button" aria-label={name}><ExitIcon>{art}</ExitIcon></button>
        ))}
      </div>
    </aside>
  );
}

/* ---------- Bottom area ---------- */

const SHEETS = ['TXF', '策略部位', '配對', 'MACD', 'TWS', 'FITX+VIX', '股票期貨', '外期', '自定義商品', '圖表下單'];

function SheetTabs() {
  const shape = '[clip-path:polygon(0_0,100%_0,calc(100%_-_10px)_100%,10px_100%)]';
  return (
    <div className="flex h-[22px] shrink-0 border-t border-[#666] bg-[#e6e6e6] font-[family-name:'Open_Sans','Noto_Sans_CJK_TC',sans-serif] text-[15px]">
      <div className="flex w-[92px] items-center gap-[14px] bg-[#f0f0f0] pl-1.5">
        {['M1 0v11M9 0v11L3 5.500z', 'M8 0v11L2 5.500z', 'M2 0v11l6-5.500z', 'M9 0v11M1 0v11l6-5.500z'].map((d) => (
          <button key={d} type="button" aria-label="Scroll tabs"><svg width="10" height="11"><path d={d} fill="#666" stroke="#666" strokeWidth="1" /></svg></button>
        ))}
      </div>
      {SHEETS.map((s, i) => (
        <button key={s} type="button" className={`h-[21px] px-px pb-px ${shape} ${i === 0 ? 'bg-[#666]' : '-ml-px bg-[#999]'}`}>
          <span className={`flex h-full items-center pb-0.5 ${shape} ${i === 0 ? 'bg-[#f0f0f0] pr-3 pl-[17px]' : 'bg-[#c0c0c0] px-2.5'}`}>{s}</span>
        </button>
      ))}
      <button type="button" aria-label="Add workspace" className="ml-[17px] flex items-center">
        <svg width="18" height="18"><circle cx="9" cy="9" r="9" fill={GREEN} /><path d="M3 9h12M9 3v12" stroke="#fff" strokeWidth="2" /></svg>
      </button>
    </div>
  );
}

function DrawingToolbar() {
  return (
    <footer className="relative flex h-12 shrink-0 items-center bg-white pl-1 font-[family-name:'Open_Sans',sans-serif] text-[15px]">
      <Grip />
      <div className="ml-[5px] flex items-center">
        <Tools names={['trendLine', 'hLine', 'vLine', 'channel3', 'channel2', 'fork1', 'fork2', 'fork3']} />
        <Sep />
        <Tools names={['retrace', 'fanLines', 'extension', 'arcs', 'timeZones', 'timeExt']} />
        <Sep />
        <Tools names={['gannFan', 'gannGrid', 'gannBox']} />
        <Sep />
        <Tools names={['calculator', 'text', 'rect', 'ellipse', 'arc', 'arrowDown', 'arrowUp']} />
        <Sep />
        <Tools names={['magnet', 'pencilLock']} />
      </div>
      <div className="ml-2 w-px self-stretch bg-[#b0b0b0]" />
      <div className="ml-1 flex self-stretch"><Grip /></div>
      <div className="ml-1 flex h-[27px] w-[193px] items-center border border-[#777] pr-1">
        <input aria-label="Symbol or interval" defaultValue="Type a symbol/interval" className="w-full min-w-0 pl-[3px] outline-none" />
        <ChevronDown size={13} strokeWidth={1.6} className="shrink-0 text-[#444]" />
      </div>
      <div className="ml-2 flex"><ToolButton name="clock" /></div>
      <div className="ml-0.5 flex"><Caret label="Recent intervals" /></div>
      <div className="ml-2.5 w-px self-stretch bg-[#b0b0b0]" />
      <div className="ml-[3px] flex self-stretch"><Grip /></div>
      <Select label="Resolution" value="As is (5 Minutes)" className="ml-1 h-[27px] w-[163px]" selectClass="border-[#adadad] bg-[#e1e1e1] pl-[3px] text-[15px]" />
      <Sep />
      <div className="flex h-[27px] w-[204px] items-center border border-[#777] pr-1.5">
        <input aria-label="Date" className="w-full min-w-0 outline-none" />
        <svg width="25" height="16" viewBox="0 0 25 16" className="shrink-0">
          <path d="M.7.7h13v14.600H.7z" fill="#e9edf3" stroke="#888" strokeWidth="1.3" />
          <path d="M3 4h9M3 7h9M3 10h9M5 2v11M9 2v11" stroke="#aab" />
          <path d="M16 5h9l-4.500 5z" fill="#3e5a94" />
        </svg>
      </div>
      <ToolButton name="scriptRun" />
      <Sep />
      <button type="button" className="flex items-center">
        <svg width="37" height="35" viewBox="0 0 37 35">{ICONS.jump}</svg>Jump
      </button>
      <div className="ml-2 flex"><Sep /></div>
      <div className="ml-1 flex"><Tools names={['stepBack', 'play']} /></div>
      {/* remote session handle docked to the window edge */}
      <div className="absolute right-0 bottom-0 h-24 w-[31px] drop-shadow-[0_0_1px_#99a]">
        <div className="h-full bg-white pt-[7px] pl-[5px] [clip-path:polygon(0_3px,3px_0,100%_0,100%_66px,3px_50px,0_46px)]">
          <svg width="25" height="26" viewBox="0 0 25 26">
            <path d="M0 0h25v26H0z" fill="#0e9bf0" />
            <circle cx="12.5" cy="13" r="11" fill="#fff" />
            <path d="M3 13l5-4v3h9V9l5 4-5 4v-3H8v3z" fill="#1a8cf0" />
          </svg>
        </div>
      </div>
    </footer>
  );
}

export default function App() {
  return (
    <div className="flex h-screen flex-col overflow-hidden bg-white font-[family-name:'DejaVu_Sans_Condensed','Noto_Sans',sans-serif] text-black">
      <TitleBar />
      <MenuBar />
      <MainToolbar />
      <TradeBar />
      <main className="flex min-h-0 flex-1 bg-[#f0f0f0] pt-px">
        <DataWindow />
        <div className="flex min-w-0 flex-1 flex-col">
          <div className="flex min-h-0 flex-1">
            <div className="flex min-w-0 flex-1 flex-col">
              <Chart />
              <ScrollBar />
            </div>
            <OrderPanel />
          </div>
          <SheetTabs />
        </div>
      </main>
      <DrawingToolbar />
    </div>
  );
}
